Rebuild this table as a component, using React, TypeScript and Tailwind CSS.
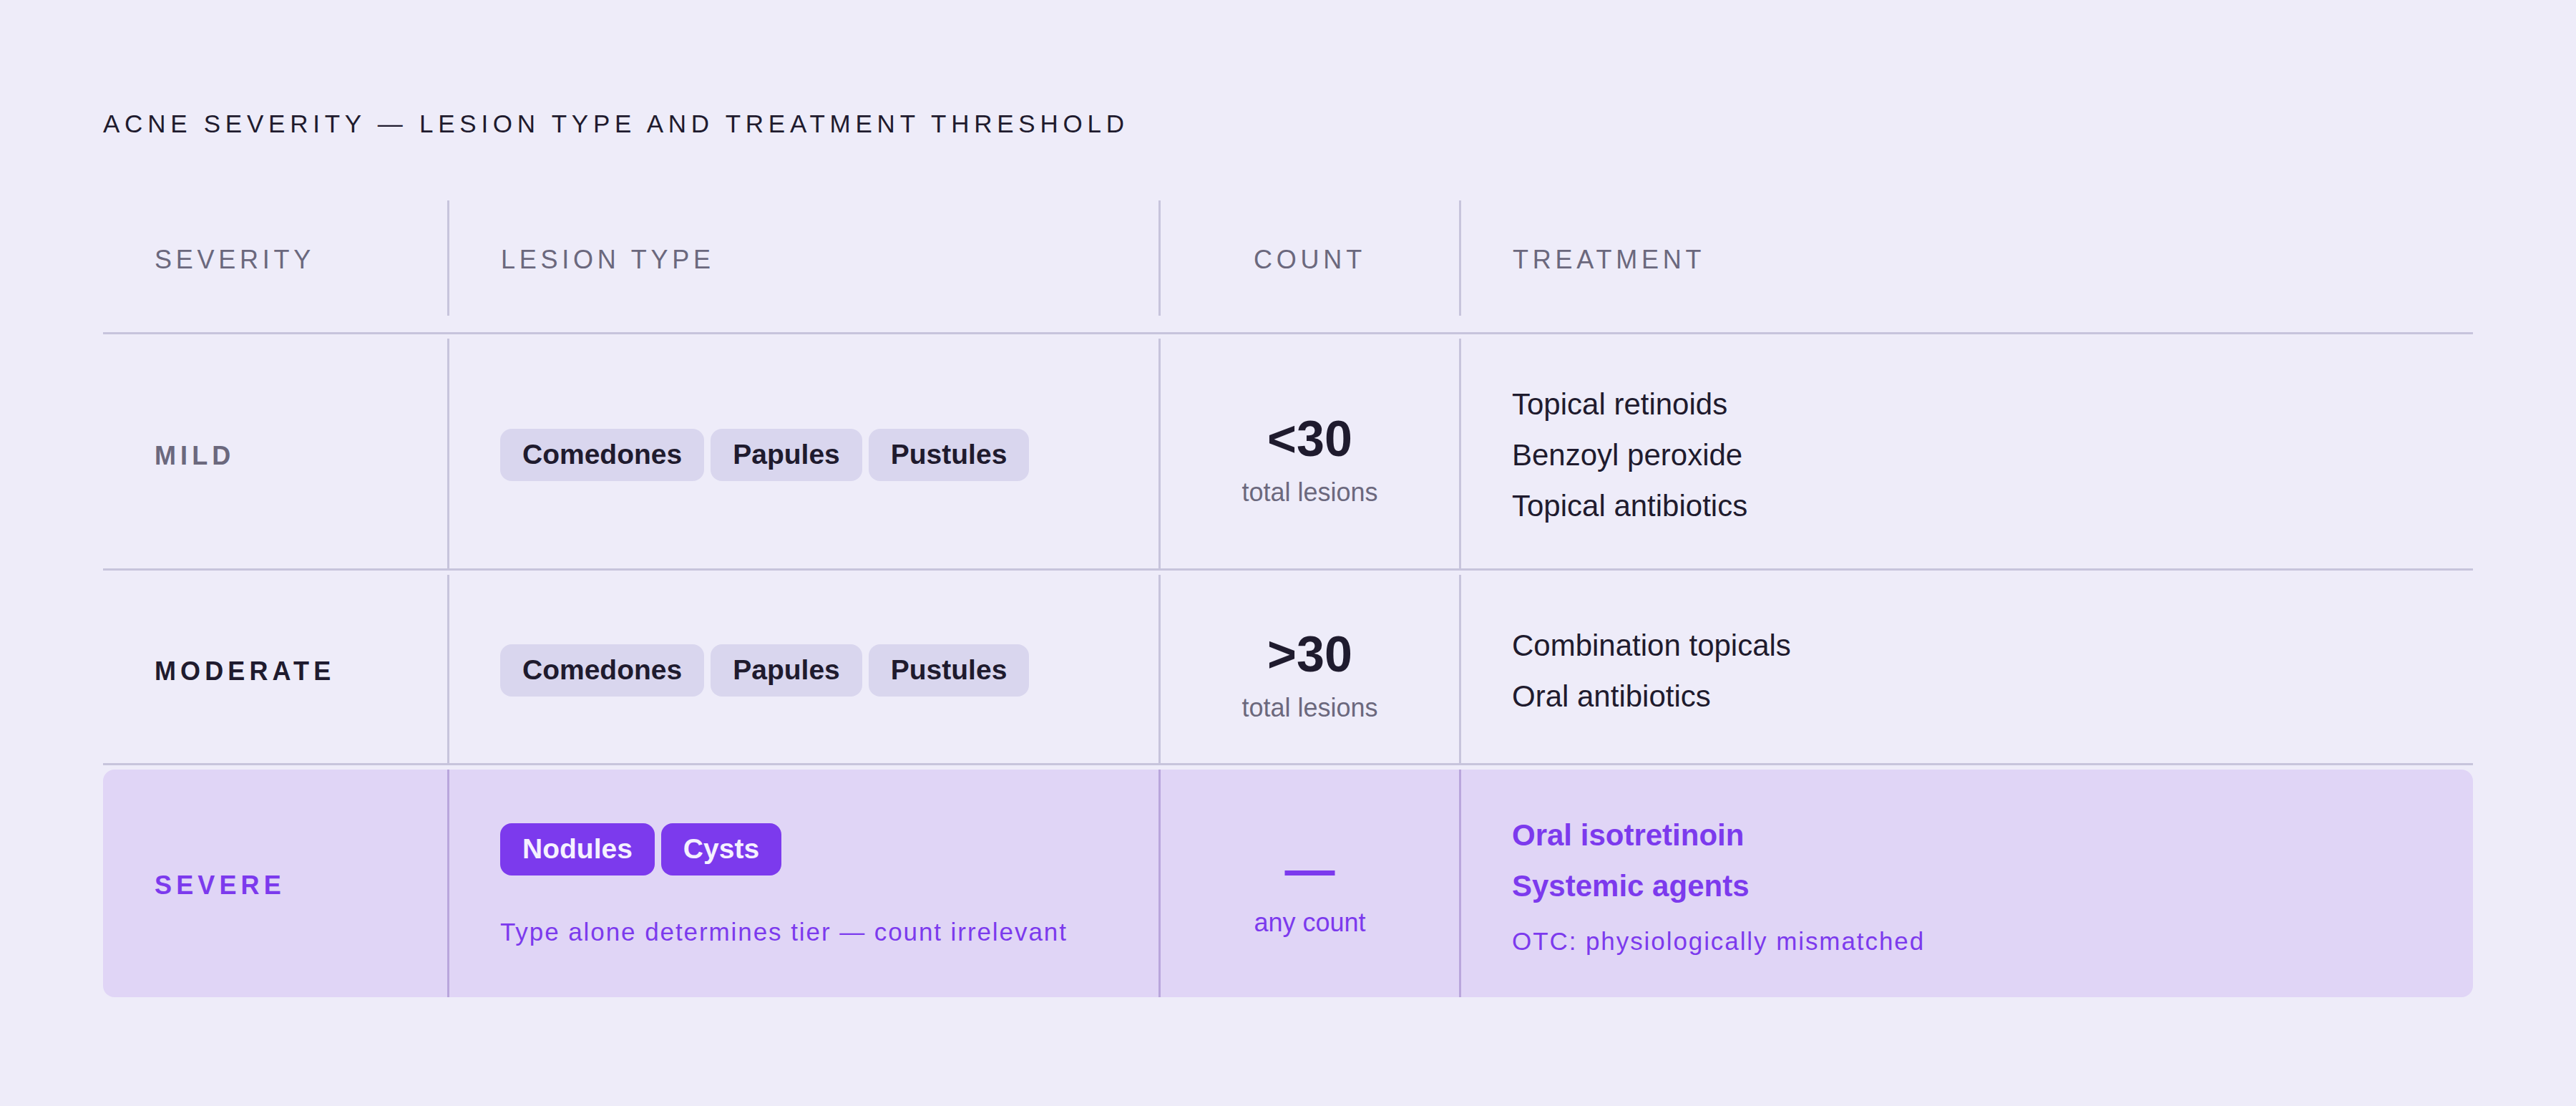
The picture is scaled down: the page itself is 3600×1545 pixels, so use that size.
import React from "react";

type Row = {
  key: string;
  label: string;
  labelClass: string;
  chips: string[];
  count: string;
  countSub: string;
  treatments: string[];
};

const ROWS: Row[] = [
  {
    key: "mild",
    label: "MILD",
    labelClass: "text-[#6b687d]",
    chips: ["Comedones", "Papules", "Pustules"],
    count: "<30",
    countSub: "total lesions",
    treatments: ["Topical retinoids", "Benzoyl peroxide", "Topical antibiotics"],
  },
  {
    key: "moderate",
    label: "MODERATE",
    labelClass: "text-[#1f1b2e]",
    chips: ["Comedones", "Papules", "Pustules"],
    count: ">30",
    countSub: "total lesions",
    treatments: ["Combination topicals", "Oral antibiotics"],
  },
];

const GRID = "grid grid-cols-[481px_994px_420px_1fr]";

function HeaderCell({ children, center, divider }: { children: React.ReactNode; center?: boolean; divider?: boolean }) {
  return (
    <div
      className={`flex items-center pt-[4px] ${center ? "justify-center" : "pl-[72px]"} ${
        divider ? "border-l-[3px] border-[#c7c4dc]" : ""
      } text-[36px] tracking-[0.16em] text-[#6b687d]`}
    >
      {children}
    </div>
  );
}

function Chip({ label, severe }: { label: string; severe?: boolean }) {
  return (
    <span
      className={`flex h-[73px] items-center rounded-[16px] px-[31px] text-[39px] font-bold ${
        severe ? "bg-[#7c3aed] text-[#f5f1ff]" : "bg-[#d9d6ee] text-[#1f1b2e]"
      }`}
    >
      {label}
    </span>
  );
}

function CountBlock({ value, sub, severe }: { value: string; sub: string; severe?: boolean }) {
  return (
    <div className="flex flex-col items-center">
      <span className={`text-[70px] font-bold leading-[112px] ${severe ? "text-[#7c3aed]" : "text-[#1f1b2e]"}`}>{value}</span>
      <span className={`pb-[6px] text-[36px] leading-[37px] ${severe ? "text-[#7c3aed]" : "text-[#6b687d]"}`}>{sub}</span>
    </div>
  );
}

function TableRow({ row }: { row: Row }) {
  return (
    <div className={`${GRID} mt-[6px] border-b-[3px] border-[#c7c4dc]`}>
      <div className="flex items-center pb-[51px] pl-[72px] pt-[57px]">
        <span className={`text-[36px] font-bold tracking-[0.17em] ${row.labelClass}`}>{row.label}</span>
      </div>
      <div className="flex items-center gap-[9px] border-l-[3px] border-[#c7c4dc] pb-[52px] pl-[71px] pt-[56px]">
        {row.chips.map((c) => (
          <Chip key={c} label={c} />
        ))}
      </div>
      <div className="flex items-center justify-center border-l-[3px] border-[#c7c4dc] pb-[53px] pt-[55px]">
        <CountBlock value={row.count} sub={row.countSub} />
      </div>
      <div className="flex flex-col justify-center border-l-[3px] border-[#c7c4dc] pb-[52px] pl-[71px] pt-[56px]">
        {row.treatments.map((t) => (
          <span key={t} className="text-[42px] leading-[71px] text-[#1f1b2e]">
            {t}
          </span>
        ))}
      </div>
    </div>
  );
}

function SevereRow() {
  return (
    <div className={`${GRID} mt-[6px] rounded-[16px] bg-[#e0d5f6]`}>
      <div className="flex items-center pb-[51px] pl-[72px] pt-[57px]">
        <span className="text-[36px] font-bold tracking-[0.17em] text-[#7c3aed]">SEVERE</span>
      </div>
      <div className="flex flex-col justify-center border-l-[3px] border-[#b9a6dc] pb-[51px] pl-[71px] pt-[57px]">
        <div className="flex gap-[9px]">
          <Chip label="Nodules" severe />
          <Chip label="Cysts" severe />
        </div>
        <span className="mt-[56px] text-[35px] leading-[45px] tracking-[0.055em] text-[#7c3aed]">
          Type alone determines tier — count irrelevant
        </span>
      </div>
      <div className="flex items-center justify-center border-l-[3px] border-[#b9a6dc] pb-[53px] pt-[55px]">
        <CountBlock value="—" sub="any count" severe />
      </div>
      <div className="flex flex-col justify-center border-l-[3px] border-[#b9a6dc] pb-[52px] pl-[71px] pt-[56px]">
        <span className="text-[42px] font-bold leading-[71px] text-[#7c3aed]">Oral isotretinoin</span>
        <span className="text-[42px] font-bold leading-[71px] text-[#7c3aed]">Systemic agents</span>
        <span className="mt-[16px] text-[35px] leading-[52px] tracking-[0.055em] text-[#7c3aed]">
          OTC: physiologically mismatched
        </span>
      </div>
    </div>
  );
}

export default function App() {
  return (
    <div className="min-h-screen bg-[#eeecf9] px-[144px] pt-[146px] font-['Liberation_Sans',Arial,sans-serif]">
      <h1 className="text-[35px] leading-[53px] tracking-[0.193em] text-[#1f1b2e]">
        ACNE SEVERITY — LESION TYPE AND TREATMENT THRESHOLD
      </h1>

      <div className="mt-[81px]">
        <div className="border-b-[3px] border-[#c7c4dc] pb-[23px]">
          <div className={`${GRID} h-[161px]`}>
            <HeaderCell>SEVERITY</HeaderCell>
            <HeaderCell divider>LESION TYPE</HeaderCell>
            <HeaderCell divider center>
              COUNT
            </HeaderCell>
            <HeaderCell divider>TREATMENT</HeaderCell>
          </div>
        </div>

        {ROWS.map((r) => (
          <TableRow key={r.key} row={r} />
        ))}
        <SevereRow />
      </div>
    </div>
  );
}
